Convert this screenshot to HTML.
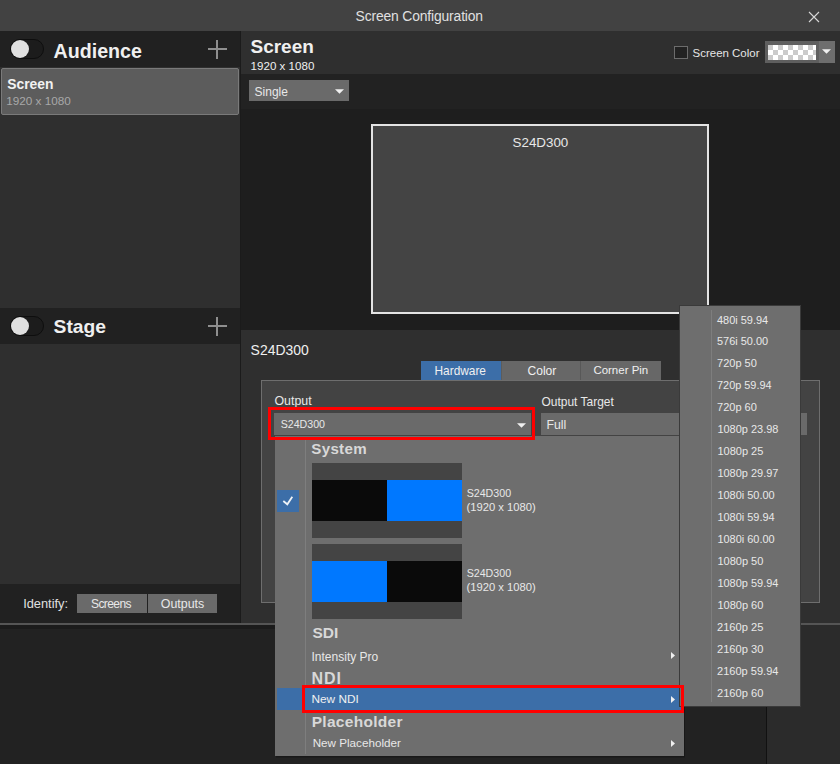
<!DOCTYPE html>
<html><head><meta charset="utf-8">
<style>
*{margin:0;padding:0;box-sizing:border-box;}
html,body{width:840px;height:764px;overflow:hidden;background:#222;font-family:"Liberation Sans",sans-serif;color:#e6e6e6;}
.a{position:absolute;}
.t{position:absolute;white-space:nowrap;line-height:1;}
</style></head><body>
<!-- title bar -->
<div class="a" style="left:0;top:0;width:840px;height:31px;background:#424242;"></div>
<div id="t1" class="t" style="left:355.56px;top:10px;font-size:13.89px;letter-spacing:-0.15px;color:#e0e0e0;">Screen Configuration</div>
<svg class="a" style="left:808px;top:11px;" width="12" height="12"><path d="M1 1L11 11M11 1L1 11" stroke="#d8d8d8" stroke-width="1.1"/></svg>

<!-- left panel -->
<div class="a" style="left:0;top:31px;width:240px;height:553px;background:#2f2f2f;"></div><div class="a" style="left:240px;top:31px;width:1px;height:592px;background:#1b1b1b;"></div>
<div class="a" style="left:0;top:31px;width:240px;height:36px;background:#212121;"></div>
<div class="a" style="left:10px;top:39px;width:34px;height:20px;border-radius:10px;background:#1c1c1c;border:1px solid #0e0e0e;"></div>
<div class="a" style="left:11px;top:40px;width:18px;height:18px;border-radius:9px;background:#e0e0e0;"></div>
<div id="t2" class="t" style="left:53.59px;top:42px;font-size:19.64px;font-weight:bold;color:#f0f0f0;">Audience</div>
<div class="a" style="left:208px;top:48px;width:19px;height:2px;background:#8f8f8f;"></div>
<div class="a" style="left:216px;top:40px;width:2px;height:19px;background:#8f8f8f;"></div>

<div class="a" style="left:1px;top:68px;width:238px;height:47px;background:#5c5c5c;border:1px solid #7a7a7a;border-radius:2px;"></div>
<div id="t3" class="t" style="left:7.2px;top:78px;font-size:13.88px;font-weight:bold;color:#f2f2f2;">Screen</div>
<div id="t4" class="t" style="left:6.19px;top:95px;font-size:11.73px;color:#a8a8a8;">1920 x 1080</div>

<div class="a" style="left:0;top:308px;width:240px;height:36px;background:#212121;"></div>
<div class="a" style="left:10px;top:316px;width:34px;height:20px;border-radius:10px;background:#1c1c1c;border:1px solid #0e0e0e;"></div>
<div class="a" style="left:11px;top:317px;width:18px;height:18px;border-radius:9px;background:#e0e0e0;"></div>
<div id="t5" class="t" style="left:53.6px;top:317px;font-size:19.28px;font-weight:bold;color:#f0f0f0;">Stage</div>
<div class="a" style="left:208px;top:325px;width:19px;height:2px;background:#8f8f8f;"></div>
<div class="a" style="left:216px;top:317px;width:2px;height:19px;background:#8f8f8f;"></div>

<!-- identify bar -->
<div class="a" style="left:0;top:584px;width:240px;height:39px;background:#212121;"></div>
<div id="t6" class="t" style="left:23.17px;top:598px;font-size:12.84px;color:#e0e0e0;">Identify:</div>
<div class="a" style="left:77px;top:594px;width:70px;height:19px;background:#6a6a6a;"></div>
<div class="a" style="left:148px;top:594px;width:69px;height:19px;background:#6a6a6a;"></div>
<div id="t7" class="t" style="left:91.07px;top:598px;font-size:12px;color:#e8e8e8;letter-spacing:-0.6px;">Screens</div>
<div id="t8" class="t" style="left:160.73px;top:598px;font-size:12.43px;color:#e8e8e8;">Outputs</div>

<!-- right column -->
<div class="a" style="left:241px;top:31px;width:599px;height:43px;background:#2f2f2f;"></div>
<div id="t9" class="t" style="left:250.47px;top:37px;font-size:19.01px;font-weight:bold;color:#f0f0f0;">Screen</div>
<div id="t10" class="t" style="left:250.61px;top:61px;font-size:11.58px;color:#f0f0f0;">1920 x 1080</div>
<div class="a" style="left:674px;top:46px;width:14px;height:13px;border:1px solid #6c6c6c;background:#222;"></div>
<div id="t11" class="t" style="left:692.56px;top:48px;font-size:11.47px;color:#e6e6e6;">Screen Color</div>
<div class="a" style="left:765px;top:41px;width:70px;height:22px;background:#5f5f5f;"></div>
<div class="a" style="left:768px;top:45px;width:48px;height:15px;background-color:#fff;background-image:linear-gradient(45deg,#cbcbcb 25%,transparent 25%,transparent 75%,#cbcbcb 75%),linear-gradient(45deg,#cbcbcb 25%,transparent 25%,transparent 75%,#cbcbcb 75%);background-size:10px 10px;background-position:5px 0,0 5px;"></div>
<div class="a" style="left:819px;top:41px;width:16px;height:22px;background:#6e6e6e;"></div>
<svg class="a" style="left:822px;top:49px;" width="9" height="5"><path d="M0 0.2H9L4.5 4.8Z" fill="#f0f0f0"/></svg>

<div class="a" style="left:241px;top:74px;width:599px;height:35px;background:#222222;"></div>
<div class="a" style="left:249px;top:80px;width:100px;height:21px;background:#6a6a6a;"></div>
<div id="t12" class="t" style="left:254.6px;top:86px;font-size:12.0px;color:#e8e8e8;">Single</div>
<svg class="a" style="left:334.5px;top:89px;" width="9" height="5"><path d="M0 0.2H9L4.5 4.8Z" fill="#f0f0f0"/></svg>

<!-- preview -->
<div class="a" style="left:241px;top:109px;width:599px;height:221px;background:#1e1e1e;"></div>
<div class="a" style="left:371px;top:124px;width:338px;height:190px;background:#444;border:2px solid #e4e4e4;"></div>
<div id="t13" class="t" style="left:512.59px;top:136px;font-size:13.36px;color:#e8e8e8;">S24D300</div>

<!-- bottom panel -->
<div class="a" style="left:241px;top:330px;width:599px;height:293px;background:#2f2f2f;"></div>
<div id="t14" class="t" style="left:250.6px;top:344px;font-size:13.95px;color:#f0f0f0;">S24D300</div>
<div class="a" style="left:421px;top:361px;width:80px;height:19px;background:#3c6ea8;"></div>
<div class="a" style="left:501px;top:361px;width:80px;height:19px;background:#676767;"></div><div class="a" style="left:501px;top:361px;width:1px;height:19px;background:#5c5c5c;"></div><div class="a" style="left:580px;top:361px;width:1px;height:19px;background:#585858;"></div>
<div class="a" style="left:581px;top:361px;width:80px;height:19px;background:#676767;"></div>
<div id="t15" class="t" style="left:434.5px;top:366px;font-size:11.88px;color:#f0f0f0;">Hardware</div>
<div id="t16" class="t" style="left:527.44px;top:365px;font-size:12.09px;color:#f0f0f0;">Color</div>
<div id="t17" class="t" style="left:593.4px;top:365px;font-size:11.47px;color:#f0f0f0;">Corner Pin</div>

<div class="a" style="left:261px;top:380px;width:559px;height:223px;background:#434343;border:1px solid #6e6e6e;"></div>
<div id="t18" class="t" style="left:274.49px;top:395px;font-size:12.4px;color:#e8e8e8;">Output</div>
<div id="t19" class="t" style="left:541.5px;top:396px;font-size:11.98px;color:#e8e8e8;">Output Target</div>
<div class="a" style="left:274px;top:413px;width:257px;height:22px;background:#6a6a6a;"></div>
<div id="t20" class="t" style="left:280.71px;top:419px;font-size:10.63px;color:#e8e8e8;">S24D300</div>
<svg class="a" style="left:516.5px;top:423px;" width="9" height="5"><path d="M0 0.2H9L4.5 4.8Z" fill="#f0f0f0"/></svg>
<div class="a" style="left:541px;top:413px;width:266px;height:22px;background:#6a6a6a;"></div>
<div id="t21" class="t" style="left:546.45px;top:419px;font-size:12.34px;color:#e8e8e8;">Full</div>

<!-- bottom area -->
<div class="a" style="left:0;top:623px;width:840px;height:2px;background:#555;"></div>
<div class="a" style="left:0;top:625px;width:840px;height:4px;background:#1b1b1b;"></div>
<div class="a" style="left:766px;top:625px;width:1px;height:139px;background:#111;"></div>
<div class="a" style="left:767px;top:625px;width:73px;height:139px;background:#2b2b2b;"></div>

<!-- popup -->
<div class="a" style="left:275px;top:436px;width:409px;height:320px;background:#6e6e6e;box-shadow:1px 1px 0 #181818, 1px 2px 0 #1d1d1d;"></div>
<div class="a" style="left:305px;top:440px;width:1px;height:314px;background:#7e7e7e;"></div>
<div id="t22" class="t" style="left:311.29px;top:441px;font-size:15.14px;font-weight:bold;letter-spacing:0.3px;color:#d8d8d8;">System</div>
<div class="a" style="left:277px;top:490px;width:22px;height:22px;background:#3c6ea8;"></div>
<svg class="a" style="left:281px;top:494px;" width="14" height="14"><path d="M2.3 7L6.3 10.3L11.3 2.8" stroke="#eef2f6" stroke-width="1.8" fill="none"/></svg>

<div class="a" style="left:312px;top:463px;width:150px;height:75px;background:#444;"></div>
<div class="a" style="left:312px;top:480px;width:75px;height:41px;background:#0a0a0a;"></div>
<div class="a" style="left:387px;top:480px;width:75px;height:41px;background:#0078ff;"></div>
<div id="t23" class="t" style="left:466.65px;top:488px;font-size:10.66px;color:#e8e8e8;">S24D300</div>
<div id="t24" class="t" style="left:466.6px;top:502px;font-size:11.21px;color:#e8e8e8;">(1920 x 1080)</div>

<div class="a" style="left:312px;top:544px;width:150px;height:75px;background:#444;"></div>
<div class="a" style="left:312px;top:561px;width:75px;height:41px;background:#0078ff;"></div>
<div class="a" style="left:387px;top:561px;width:75px;height:41px;background:#0a0a0a;"></div>
<div id="t25" class="t" style="left:466.65px;top:568px;font-size:10.66px;color:#e8e8e8;">S24D300</div>
<div id="t26" class="t" style="left:466.6px;top:582px;font-size:11.21px;color:#e8e8e8;">(1920 x 1080)</div>

<div id="t27" class="t" style="left:312.48px;top:625px;font-size:15.5px;font-weight:bold;letter-spacing:0px;color:#d8d8d8;">SDI</div>
<div id="t28" class="t" style="left:311.5px;top:651px;font-size:12.03px;color:#e8e8e8;">Intensity Pro</div>
<svg class="a" style="left:671px;top:652px;" width="4" height="7"><path d="M0 0V7L4 3.5Z" fill="#f0f0f0"/></svg>
<div id="t29" class="t" style="left:311.38px;top:671px;font-size:16px;font-weight:bold;letter-spacing:1px;color:#d8d8d8;">NDI</div>
<div class="a" style="left:277px;top:688px;width:407px;height:22px;background:#3c6ea8;"></div>
<div id="t30" class="t" style="left:311.51px;top:694px;font-size:11.83px;color:#f0f0f0;">New NDI</div>
<svg class="a" style="left:671px;top:696px;" width="4" height="7"><path d="M0 0V7L4 3.5Z" fill="#f0f0f0"/></svg>
<div id="t31" class="t" style="left:311.7px;top:714px;font-size:15.5px;font-weight:bold;letter-spacing:0.3px;color:#d8d8d8;">Placeholder</div>
<div id="t32" class="t" style="left:312.71px;top:737px;font-size:11.66px;color:#e8e8e8;">New Placeholder</div>
<svg class="a" style="left:671px;top:740px;" width="4" height="7"><path d="M0 0V7L4 3.5Z" fill="#f0f0f0"/></svg>


<!-- submenu -->
<div class="a" style="left:680px;top:306px;width:120px;height:400px;background:#6e6e6e;box-shadow:0 0 0 1px #3a3a3a;"></div>
<div class="a" style="left:711px;top:310px;width:1px;height:392px;background:#7e7e7e;"></div>
<div id="t33" class="t" style="left:717.0px;top:315px;font-size:10.96px;color:#e8e8e8;">480i 59.94</div>
<div id="t34" class="t" style="left:717.0px;top:336px;font-size:10.96px;color:#e8e8e8;">576i 50.00</div>
<div id="t35" class="t" style="left:717.0px;top:358px;font-size:11.02px;color:#e8e8e8;">720p 50</div>
<div id="t36" class="t" style="left:717.0px;top:380px;font-size:10.92px;color:#e8e8e8;">720p 59.94</div>
<div id="t37" class="t" style="left:717.0px;top:402px;font-size:11.02px;color:#e8e8e8;">720p 60</div>
<div id="t38" class="t" style="left:717.43px;top:424px;font-size:10.97px;color:#e8e8e8;">1080p 23.98</div>
<div id="t39" class="t" style="left:717.42px;top:446px;font-size:11.03px;color:#e8e8e8;">1080p 25</div>
<div id="t40" class="t" style="left:717.43px;top:468px;font-size:10.97px;color:#e8e8e8;">1080p 29.97</div>
<div id="t41" class="t" style="left:717.43px;top:490px;font-size:10.95px;color:#e8e8e8;">1080i 50.00</div>
<div id="t42" class="t" style="left:717.43px;top:512px;font-size:10.95px;color:#e8e8e8;">1080i 59.94</div>
<div id="t43" class="t" style="left:717.43px;top:534px;font-size:10.95px;color:#e8e8e8;">1080i 60.00</div>
<div id="t44" class="t" style="left:717.42px;top:556px;font-size:11.03px;color:#e8e8e8;">1080p 50</div>
<div id="t45" class="t" style="left:717.43px;top:578px;font-size:10.97px;color:#e8e8e8;">1080p 59.94</div>
<div id="t46" class="t" style="left:717.42px;top:600px;font-size:11.03px;color:#e8e8e8;">1080p 60</div>
<div id="t47" class="t" style="left:717.0px;top:622px;font-size:11.12px;color:#e8e8e8;">2160p 25</div>
<div id="t48" class="t" style="left:717.0px;top:644px;font-size:11.12px;color:#e8e8e8;">2160p 30</div>
<div id="t49" class="t" style="left:717.0px;top:666px;font-size:11.06px;color:#e8e8e8;">2160p 59.94</div>
<div id="t50" class="t" style="left:717.0px;top:688px;font-size:11.12px;color:#e8e8e8;">2160p 60</div>
<!-- red highlight boxes -->
<div class="a" style="left:268px;top:407px;width:267px;height:33px;border:3px solid #ff0000;"></div>
<div class="a" style="left:302px;top:685px;width:382px;height:28px;border:3px solid #ff0000;"></div>
</body></html>
